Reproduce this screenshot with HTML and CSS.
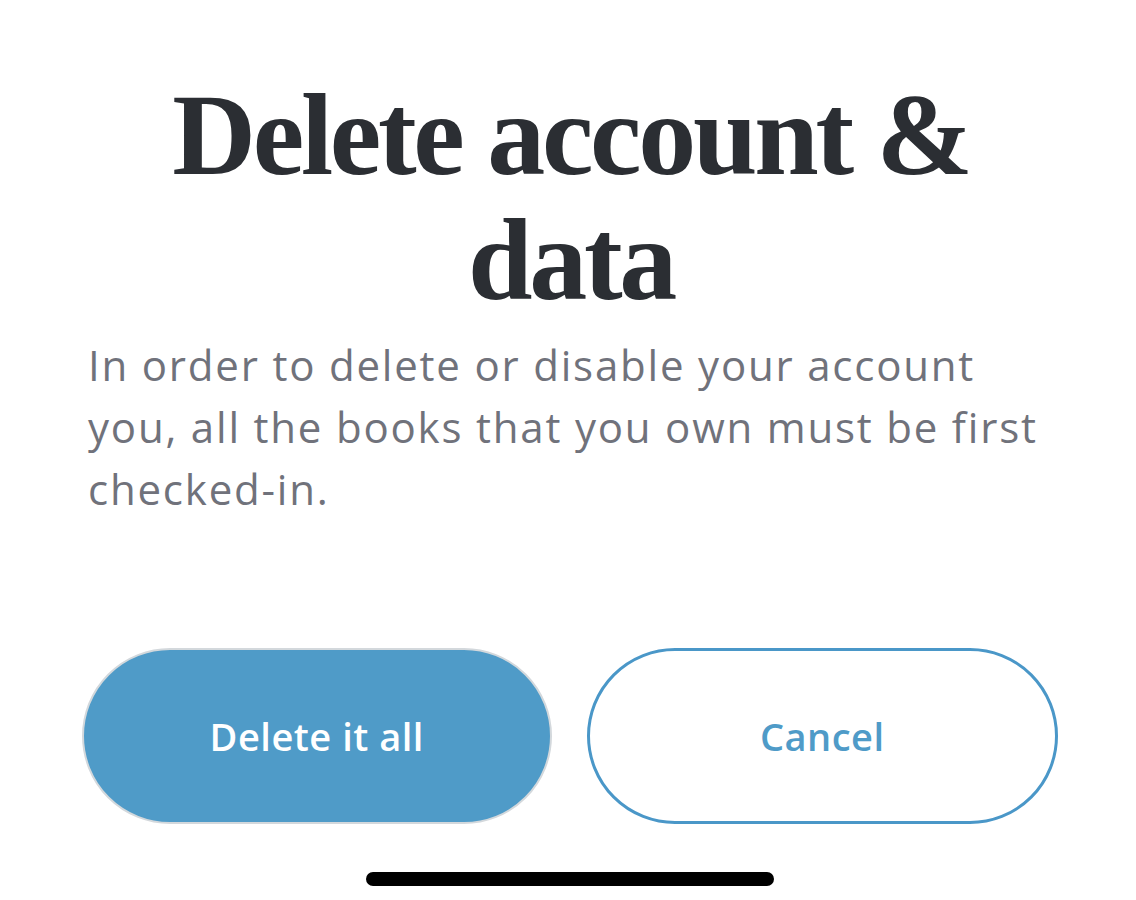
FILE: index.html
```html
<!DOCTYPE html>
<html lang="en">
<head>
<meta charset="utf-8">
<title>Delete account &amp; data</title>
<link rel="stylesheet" href="styles.css">
</head>
<body>
<main class="screen">
  <h1 class="title">Delete account &amp; data</h1>
  <p class="message">In order to delete or disable your account you, all the books that you own must be first checked-in.</p>
  <div class="actions">
    <button class="btn btn-primary" type="button">Delete it all</button>
    <button class="btn btn-outline" type="button">Cancel</button>
  </div>
  <div class="home-indicator"></div>
</main>
</body>
</html>
```

FILE: styles.css
```css
html, body {
  margin: 0;
  padding: 0;
  background: #ffffff;
}

.screen {
  width: 1136px;
  height: 900px;
  display: flex;
  flex-direction: column;
  align-items: center;
  overflow: hidden;
}

.title {
  margin: 73px 0 0 6px;
  width: 880px;
  font-family: "Liberation Serif", "Times New Roman", serif;
  font-weight: 700;
  font-size: 116px;
  line-height: 125px;
  letter-spacing: -3.3px;
  color: #2b2e33;
  text-align: center;
}

.message {
  margin: 11px 0 0 0;
  align-self: flex-start;
  margin-left: 88px;
  width: 975px;
  font-family: "Open Sans", "Noto Sans", sans-serif;
  font-weight: 400;
  font-size: 42px;
  line-height: 62px;
  letter-spacing: 1.8px;
  color: #70727b;
}

.actions {
  margin-top: 128px;
  align-self: stretch;
  display: flex;
  gap: 35px;
  padding: 0 78px 0 82px;
}

.btn {
  flex: 1;
  height: 176px;
  border-radius: 88px;
  font-family: "Open Sans", "Noto Sans", sans-serif;
  font-weight: 600;
  font-size: 38px;
  letter-spacing: 0.5px;
  cursor: pointer;
}

.btn-primary {
  background: #4f9bc8;
  color: #ffffff;
  border: 2px solid #d3d8dc;
}

.btn-outline {
  background: #ffffff;
  color: #4f9bc8;
  border: 3px solid #4a97c8;
}

.home-indicator {
  margin: 48px 0 0 4px;
  width: 408px;
  height: 14px;
  border-radius: 7px;
  background: #000000;
}
```
